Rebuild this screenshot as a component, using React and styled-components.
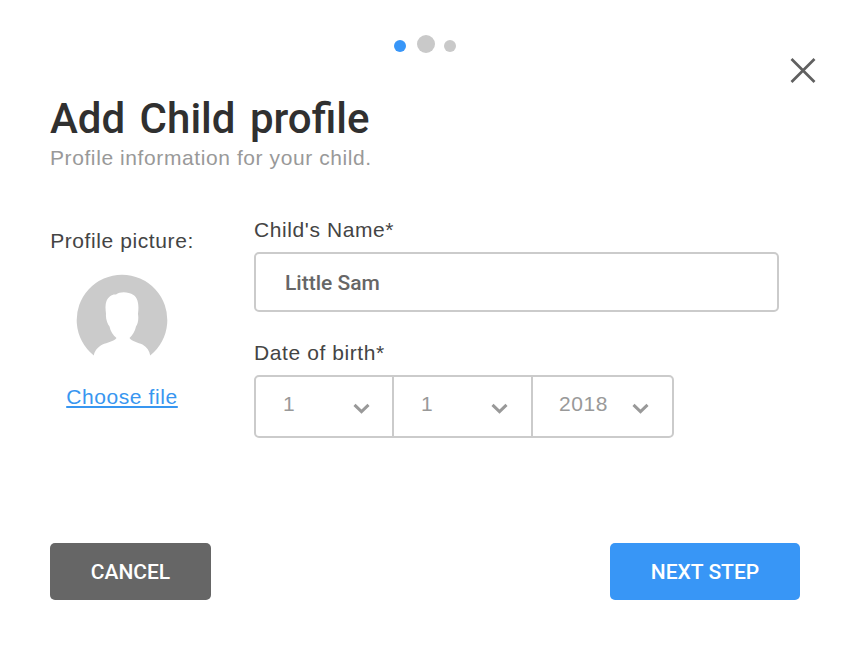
import React from "react";
import styled, { createGlobalStyle } from "styled-components";

const GlobalStyle = createGlobalStyle`
  *, *::before, *::after { box-sizing: border-box; }
  body { margin: 0; background: #fff; }
`;

const Dialog = styled.main`
  width: 853px;
  height: 655px;
  padding: 35px 53px 0 50px;
  background: #fff;
  font-family: "Liberation Sans", Arial, sans-serif;
  font-size: 21px;
  line-height: 24px;
  letter-spacing: 0.59px;
  color: #444;
`;

const Steps = styled.nav`
  display: flex;
  align-items: center;
  gap: 11px;
  height: 18px;
  padding-left: 343.5px;
`;

const StepDot = styled.span`
  width: ${(p) => (p.$large ? 18 : 12)}px;
  height: ${(p) => (p.$large ? 18 : 12)}px;
  margin-top: ${(p) => (p.$large ? 0 : 4)}px;
  border-radius: 50%;
  background: ${(p) => (p.$active ? "#3896f8" : "#c9c9c9")};

  &:last-child { margin-left: -2px; }
`;

const CloseRow = styled.div`
  display: flex;
  justify-content: flex-end;
  margin: 5px -16px 0 0;
`;

const CloseButton = styled.button`
  display: block;
  width: 26px;
  height: 25px;
  padding: 0;
  border: 0;
  background: none;

  svg { display: block; }
`;

const Title = styled.h1`
  margin: 11px 0 0;
  font: 500 42px/50px Roboto, sans-serif;
  letter-spacing: 0;
  word-spacing: 4px;
  color: #303030;
`;

const Subtitle = styled.p`
  margin: 2px 0 0;
  color: #999;
`;

const Form = styled.form`
  display: grid;
  grid-template-columns: 144px 524px;
  column-gap: 60px;
  margin-top: 48px;
`;

const PictureColumn = styled.div`
  display: flex;
  flex-direction: column;
  align-items: center;
  padding-top: 11px;
  white-space: nowrap;
`;

const AvatarIcon = styled.svg`
  display: block;
  margin-top: 21px;
`;

const FileLink = styled.a`
  margin-top: 19px;
  color: #3896f0;
  text-decoration: underline;
`;

const Label = styled.label`
  display: block;
  margin-top: ${(p) => p.$top || 0}px;
`;

const NameInput = styled.input`
  display: block;
  width: 525px;
  height: 60px;
  margin-top: 10px;
  padding: 1px 29px 0;
  border: 2px solid #cbcbcb;
  border-radius: 5px;
  outline: none;
  font: 500 21px/24px Roboto, sans-serif;
  color: #666;
`;

const DateGroup = styled.div`
  display: flex;
  width: 420px;
  height: 63px;
  margin-top: 10px;
  border: 2px solid #cbcbcb;
  border-radius: 5px;
`;

const DatePart = styled.button`
  display: flex;
  justify-content: space-between;
  width: ${(p) => p.$width}px;
  padding: 15px ${(p) => p.$right}px 0 ${(p) => p.$left}px;
  border: 0;
  background: none;
  font: inherit;
  letter-spacing: 0.6px;
  color: #999;

  & + & { border-left: 2px solid #cbcbcb; }
  svg { display: block; margin-top: 11px; }
`;

const Actions = styled.footer`
  display: flex;
  justify-content: space-between;
  margin-top: 105px;
`;

const ActionButton = styled.button`
  width: ${(p) => p.$width}px;
  height: 57px;
  padding: 0;
  border: 0;
  border-radius: 5px;
  background: ${(p) => (p.$primary ? "#3896f6" : "#666")};
  font: 500 21px/24px Roboto, sans-serif;
  color: #fff;
`;

const dateParts = [
  { name: "Day", value: "1", width: 136, left: 27, right: 22 },
  { name: "Month", value: "1", width: 139, left: 27, right: 23 },
  { name: "Year", value: "2018", width: 141, left: 26, right: 23 },
];

function Chevron() {
  return (
    <svg width="17" height="12" viewBox="0 0 17 12" fill="none" stroke="#999" strokeWidth="3">
      <path d="M1.5 1.8 8.5 8.6 15.5 1.8" />
    </svg>
  );
}

function Avatar() {
  return (
    <AvatarIcon width="92" height="92" viewBox="0 0 92 92" aria-label="Profile picture">
      <path
        fill="#cbcbcb"
        d="M17.8 81.5 A45.3 45.3 0 1 1 74.2 81.5 C73.5 77 71 73 66.5 70.5 C62 68.5 56 67.5 53.5 64 C56.5 61 59 57.5 60 52.5 C62 50 62.8 45 62 40 C63 32 62.5 24.5 57.5 21 C52 17.5 44 17.5 40 20.5 C36 20 32.5 22.5 30.5 27 C29 31 29.5 35 30 40 C29.5 45 31.5 50 33.5 52.5 C34.5 57.5 37 61 40.5 64 C38 67.5 31 68.5 26.5 70.5 C21.5 73 18.5 77 17.8 81.5 Z"
      />
    </AvatarIcon>
  );
}

export default function App() {
  return (
    <>
      <GlobalStyle />
      <Dialog>
        <Steps aria-label="Progress">
          <StepDot $active />
          <StepDot $large />
          <StepDot />
        </Steps>
        <CloseRow>
          <CloseButton aria-label="Close">
            <svg width="26" height="25" viewBox="0 0 26 25" stroke="#606060" strokeWidth="2.7">
              <path d="M1.5 1 24.5 24 M24.5 1 1.5 24" />
            </svg>
          </CloseButton>
        </CloseRow>
        <Title>Add Child profile</Title>
        <Subtitle>Profile information for your child.</Subtitle>
        <Form>
          <PictureColumn>
            <span>Profile picture:</span>
            <Avatar />
            <FileLink href="#">Choose file</FileLink>
          </PictureColumn>
          <div>
            <Label htmlFor="child-name">Child's Name*</Label>
            <NameInput id="child-name" defaultValue="Little Sam" />
            <Label as="div" $top={29}>Date of birth*</Label>
            <DateGroup>
              {dateParts.map((part) => (
                <DatePart
                  key={part.name}
                  type="button"
                  aria-label={part.name}
                  $width={part.width}
                  $left={part.left}
                  $right={part.right}
                >
                  <span>{part.value}</span>
                  <Chevron />
                </DatePart>
              ))}
            </DateGroup>
          </div>
        </Form>
        <Actions>
          <ActionButton $width={161}>CANCEL</ActionButton>
          <ActionButton $width={190} $primary>NEXT STEP</ActionButton>
        </Actions>
      </Dialog>
    </>
  );
}
